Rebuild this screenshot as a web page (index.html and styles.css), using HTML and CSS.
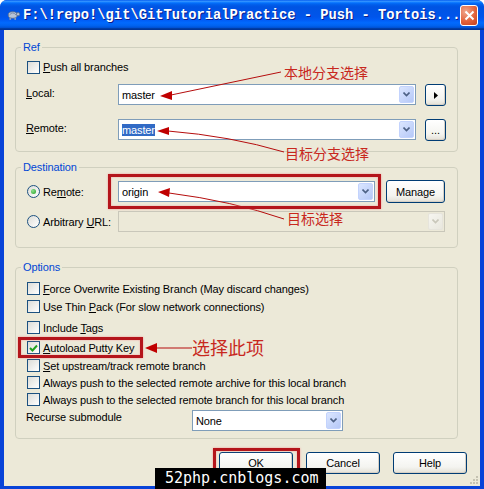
FILE: index.html
```html
<!DOCTYPE html>
<html lang="en">
<head>
    <meta charset="UTF-8">
    <meta name="viewport" content="width=device-width, initial-scale=1.0">
    <title>Push - TortoiseGit</title>
    <link rel="stylesheet" href="styles.css">
</head>
<body>
<div class="window">
    <div class="titlebar">
        <svg class="app-icon" width="16" height="14" viewBox="0 0 16 14">
            <ellipse cx="7" cy="7" rx="5.5" ry="4" fill="#b8c4d6" stroke="#5d6f8c"/>
            <path d="M3 7 Q7 2 11 7" fill="none" stroke="#6f809c"/>
            <circle cx="13.5" cy="6" r="2" fill="#b8c4d6" stroke="#5d6f8c"/>
            <rect x="3" y="10" width="2" height="3" fill="#8a9ab4"/>
            <rect x="9" y="10" width="2" height="3" fill="#8a9ab4"/>
        </svg>
        <span class="title">F:\!repo!\git\GitTutorialPractice - Push - Tortois...</span>
        <div class="close">
            <svg width="11" height="11" viewBox="0 0 11 11"><path d="M1.5 1.5 L9.5 9.5 M9.5 1.5 L1.5 9.5" stroke="#fff" stroke-width="2"/></svg>
        </div>
    </div>

    <div class="client">
        <fieldset class="group">
            <legend>Ref</legend>
            <div class="group-body ref-body">
                <div class="row-check">
                    <span class="check"></span>
                    <span><u>P</u>ush all branches</span>
                </div>
                <div class="row-field">
                    <span class="label"><u>L</u>ocal:</span>
                    <div class="combo combo-ref">
                        <span class="combo-text">master</span>
                        <span class="drop"><svg width="7" height="5" viewBox="0 0 7 5"><path d="M0.5 0.5 L3.5 3.5 L6.5 0.5" fill="none" stroke="#4d6185" stroke-width="1.6"/></svg></span>
                    </div>
                    <div class="btn btn-small">
                        <svg width="4" height="7" viewBox="0 0 4 7"><path d="M0 0 L4 3.5 L0 7 Z" fill="#000"/></svg>
                    </div>
                </div>
                <div class="row-field row-second">
                    <span class="label"><u>R</u>emote:</span>
                    <div class="combo combo-ref">
                        <span class="combo-text"><span class="sel">master</span></span>
                        <span class="drop"><svg width="7" height="5" viewBox="0 0 7 5"><path d="M0.5 0.5 L3.5 3.5 L6.5 0.5" fill="none" stroke="#4d6185" stroke-width="1.6"/></svg></span>
                    </div>
                    <div class="btn btn-small">...</div>
                </div>
            </div>
        </fieldset>

        <fieldset class="group group-dest">
            <legend>Destination</legend>
            <div class="group-body dest-body">
                <div class="row-dest">
                    <span class="label-col"><span class="radio radio-on"></span><span>Re<u>m</u>ote:</span></span>
                    <div class="combo combo-origin">
                        <span class="combo-text">origin</span>
                        <span class="drop"><svg width="7" height="5" viewBox="0 0 7 5"><path d="M0.5 0.5 L3.5 3.5 L6.5 0.5" fill="none" stroke="#4d6185" stroke-width="1.6"/></svg></span>
                    </div>
                    <div class="btn btn-manage">Mana<u>g</u>e</div>
                </div>
                <div class="row-dest row-url">
                    <span class="label-col"><span class="radio"></span><span>Arbitrary <u>U</u>RL:</span></span>
                    <div class="combo combo-url disabled">
                        <span class="combo-text"></span>
                        <span class="drop"><svg width="7" height="5" viewBox="0 0 7 5"><path d="M0.5 0.5 L3.5 3.5 L6.5 0.5" fill="none" stroke="#c9c7ba" stroke-width="1.6"/></svg></span>
                    </div>
                </div>
            </div>
        </fieldset>

        <fieldset class="group group-opt">
            <legend>Options</legend>
            <div class="group-body opt-body">
                <div class="row-check opt opt-1"><span class="check"></span><span><u>F</u>orce Overwrite Existing Branch (May discard changes)</span></div>
                <div class="row-check opt opt-2"><span class="check"></span><span>Use Thin <u>P</u>ack (For slow network connections)</span></div>
                <div class="row-check opt opt-3"><span class="check"></span><span>Include <u>T</u>ags</span></div>
                <div class="row-check opt opt-4"><span class="check check-on"><svg width="9" height="8" viewBox="0 0 9 8"><path d="M1 4 L3.5 6.5 L8 1.5" fill="none" stroke="#21a121" stroke-width="2"/></svg></span><span><u>A</u>utoload Putty Key</span></div>
                <div class="row-check opt opt-5"><span class="check"></span><span><u>S</u>et upstream/track remote branch</span></div>
                <div class="row-check opt"><span class="check"></span><span>Always push to the selected remote archive for this local branch</span></div>
                <div class="row-check opt"><span class="check"></span><span>Always push to the selected remote branch for this local branch</span></div>
                <div class="row-recurse">
                    <span class="label label-recurse">Recurse submodule</span>
                    <div class="combo combo-none">
                        <span class="combo-text">None</span>
                        <span class="drop"><svg width="7" height="5" viewBox="0 0 7 5"><path d="M0.5 0.5 L3.5 3.5 L6.5 0.5" fill="none" stroke="#4d6185" stroke-width="1.6"/></svg></span>
                    </div>
                </div>
            </div>
        </fieldset>

        <div class="buttons">
            <div class="btn btn-dialog">OK</div>
            <div class="btn btn-dialog">Cancel</div>
            <div class="btn btn-dialog">Help</div>
        </div>

        <svg class="grip" width="10" height="10" viewBox="0 0 10 10">
            <g fill="#c5c2b2">
                <rect x="8" y="2" width="2" height="2"/>
                <rect x="5" y="5" width="2" height="2"/><rect x="8" y="5" width="2" height="2"/>
                <rect x="2" y="8" width="2" height="2"/><rect x="5" y="8" width="2" height="2"/><rect x="8" y="8" width="2" height="2"/>
            </g>
        </svg>
    </div>

    <!-- annotations drawn on top of the dialog -->
    <svg class="arrows" width="484" height="489" viewBox="0 0 484 489">
        <g stroke="#b50d0d" stroke-width="1" fill="none">
            <path d="M171 95 L281 72"/>
            <path d="M168 131 Q230 136 284 152"/>
            <path d="M169 193 Q232 201 284 219"/>
            <path d="M156 348 L192 348"/>
        </g>
        <g fill="#c00000">
            <path d="M160 96 L172 91 L172 100 Z"/>
            <path d="M157 131 L169 127 L169 135 Z"/>
            <path d="M158 192 L170 188 L169 197 Z"/>
            <path d="M145 348 L157 343 L157 353 Z"/>
        </g>
    </svg>
    <span class="note note-local">本地分支选择</span>
    <span class="note note-remote">目标分支选择</span>
    <span class="note note-dest">目标选择</span>
    <span class="note note-putty">选择此项</span>

    <div class="mark mark-origin"></div>
    <div class="mark mark-putty"></div>
    <div class="mark mark-ok"></div>

    <div class="watermark">52php.cnblogs.com</div>
</div>
</body>
</html>
```

FILE: styles.css
```css
body {
    margin: 0;
    background: #fff;
    font-family: 'Liberation Sans', Arial, sans-serif;
    font-size: 11px;
    letter-spacing: -0.12px;
    color: #000;
}
.window {
    position: relative;
    width: 484px;
    height: 489px;
    display: flex;
    flex-direction: column;
    background: #0843d8;
    border-radius: 7px 7px 0 0;
    overflow: hidden;
}
.titlebar {
    height: 30px;
    flex: none;
    display: flex;
    align-items: center;
    background: linear-gradient(to bottom, #0058ee 0%, #3593ff 4%, #288eff 6%, #127dff 8%, #036ffc 10%, #0262ee 14%, #0057e5 20%, #0054e3 24%, #0055eb 56%, #005bf5 66%, #026afe 76%, #0062ef 86%, #0052d6 92%, #0040ab 94%, #003092 100%);
}
.app-icon {
    margin-left: 7px;
}
.title {
    margin-left: 3px;
    font-family: 'Liberation Mono', 'DejaVu Sans Mono', monospace;
    font-weight: bold;
    font-size: 13.75px;
    letter-spacing: 0;
    color: #fff;
    text-shadow: 1px 1px #0a1e8c;
    white-space: nowrap;
}
.close {
    margin-left: auto;
    margin-right: 6px;
    width: 21px;
    height: 21px;
    box-sizing: border-box;
    border: 1px solid #fff;
    border-radius: 3px;
    background: radial-gradient(circle at 30% 30%, #f0a68d, #e2633c 55%, #c3401d);
    display: flex;
    align-items: center;
    justify-content: center;
}
.client {
    position: relative;
    flex: 1;
    margin: 0 4px 3px;
    background: #ece9d8;
}

/* group boxes */
.group {
    margin: 10px 22px 0 11px;
    padding: 0;
    border: 1px solid #d0d0bf;
    border-radius: 4px;
    min-width: 0;
}
.group legend {
    margin-left: 5px;
    padding: 0 2px;
    line-height: 14px;
    color: #0046d5;
}
.group-dest {
    margin-top: 8px;
}
.group-opt {
    margin-top: 12px;
}
.ref-body {
    padding: 5px 11px 10px 10px;
}
.dest-body {
    padding: 6px 12px 15px 11px;
}
.opt-body {
    padding: 6px 12px 7px 10px;
}

/* rows */
.row-check {
    display: flex;
    align-items: center;
    gap: 3px;
    height: 16px;
    margin-left: 1px;
    white-space: nowrap;
}
.row-field {
    display: flex;
    align-items: flex-start;
    margin-top: 9px;
}
.row-second {
    margin-top: 13px;
}
.label {
    width: 92px;
    flex: none;
    line-height: 19px;
}
.row-dest {
    display: flex;
    align-items: center;
    height: 23px;
}
.row-url {
    margin-top: 8px;
    height: 21px;
}
.label-col {
    width: 91px;
    flex: none;
    display: flex;
    align-items: center;
    gap: 3px;
}
.opt {
    height: 17px;
}
.opt-2 { margin-top: 1px; }
.opt-3 { margin-top: 4px; }
.opt-4 { margin-top: 3px; }
.opt-5 { margin-top: 1px; }
.row-recurse {
    display: flex;
    align-items: flex-start;
    margin-top: 2px;
}
.label-recurse {
    width: 166px;
    line-height: 14px;
}

/* checkbox and radio */
.check {
    width: 13px;
    height: 13px;
    box-sizing: border-box;
    border: 1px solid #1c5180;
    background: linear-gradient(135deg, #dcdcd7, #fff);
    display: flex;
    align-items: center;
    justify-content: center;
    flex: none;
}
.radio {
    width: 13px;
    height: 13px;
    box-sizing: border-box;
    border: 1px solid #1c5180;
    border-radius: 50%;
    background: linear-gradient(135deg, #dcdcd7, #fff);
    display: flex;
    align-items: center;
    justify-content: center;
    flex: none;
}
.radio-on::after {
    content: "";
    width: 5px;
    height: 5px;
    border-radius: 50%;
    background: radial-gradient(circle at 35% 35%, #8fe08f, #21a121);
}

/* combo boxes */
.combo {
    display: flex;
    align-items: center;
    height: 21px;
    box-sizing: border-box;
    border: 1px solid #7f9db9;
    background: #fff;
    padding: 1px;
    flex: none;
}
.combo-text {
    flex: 1;
    padding-left: 2px;
    white-space: nowrap;
}
.sel {
    background: #316ac5;
    color: #fff;
}
.drop {
    width: 15px;
    height: 17px;
    box-sizing: border-box;
    border: 1px solid #c3d3fd;
    border-radius: 2px;
    background: linear-gradient(135deg, #dbe6ff, #b5c8f7);
    display: flex;
    align-items: center;
    justify-content: center;
}
.combo-ref {
    width: 298px;
}
.combo-origin {
    width: 257px;
}
.combo-url {
    width: 327px;
}
.combo-none {
    width: 151px;
}
.disabled {
    border-color: #c9c7ba;
    background: #ece9d8;
}
.disabled .drop {
    border-color: #e6e4dc;
    background: linear-gradient(135deg, #f6f5f0, #e9e7de);
}

/* buttons */
.btn {
    box-sizing: border-box;
    border: 1px solid #003c74;
    border-radius: 3px;
    background: linear-gradient(#fff, #f4f4f0 70%, #e3e0d6);
    box-shadow: inset -1px -1px 0 #d6d0c5;
    display: flex;
    align-items: center;
    justify-content: center;
    flex: none;
}
.btn-small {
    width: 21px;
    height: 22px;
    margin-left: 9px;
}
.btn-manage {
    width: 59px;
    height: 23px;
    margin-left: 11px;
}
.buttons {
    display: flex;
    justify-content: flex-end;
    gap: 13px;
    margin-top: 13px;
    padding-right: 13px;
}
.btn-dialog {
    width: 74px;
    height: 22px;
}
.grip {
    position: absolute;
    right: 2px;
    bottom: 2px;
}

/* annotations */
.arrows {
    position: absolute;
    top: 0;
    left: 0;
    pointer-events: none;
}
.note {
    position: absolute;
    font-family: 'Noto Sans CJK SC', sans-serif;
    font-size: 14px;
    line-height: 14px;
    letter-spacing: 0;
    color: #c8281e;
    white-space: nowrap;
}
.note-local {
    left: 284px;
    top: 65px;
}
.note-remote {
    left: 285px;
    top: 146px;
}
.note-dest {
    left: 287px;
    top: 211px;
}
.note-putty {
    left: 192px;
    top: 338px;
    font-size: 18px;
    line-height: 18px;
}
.mark {
    position: absolute;
    box-sizing: border-box;
    border: 3px solid #b4151b;
    box-shadow: 0 0 2px #f29a9a, inset 0 0 2px #f29a9a;
}
.mark-origin {
    left: 108px;
    top: 174px;
    width: 273px;
    height: 35px;
}
.mark-putty {
    left: 18px;
    top: 337px;
    width: 125px;
    height: 21px;
}
.mark-ok {
    left: 213px;
    top: 448px;
    width: 87px;
    height: 34px;
}
.watermark {
    position: absolute;
    left: 155px;
    top: 468px;
    width: 171px;
    height: 21px;
    box-sizing: border-box;
    padding-left: 10px;
    background: #000;
    color: #fff;
    font-family: 'DejaVu Sans Mono', monospace;
    font-size: 15px;
    letter-spacing: 0;
    line-height: 21px;
}
```
